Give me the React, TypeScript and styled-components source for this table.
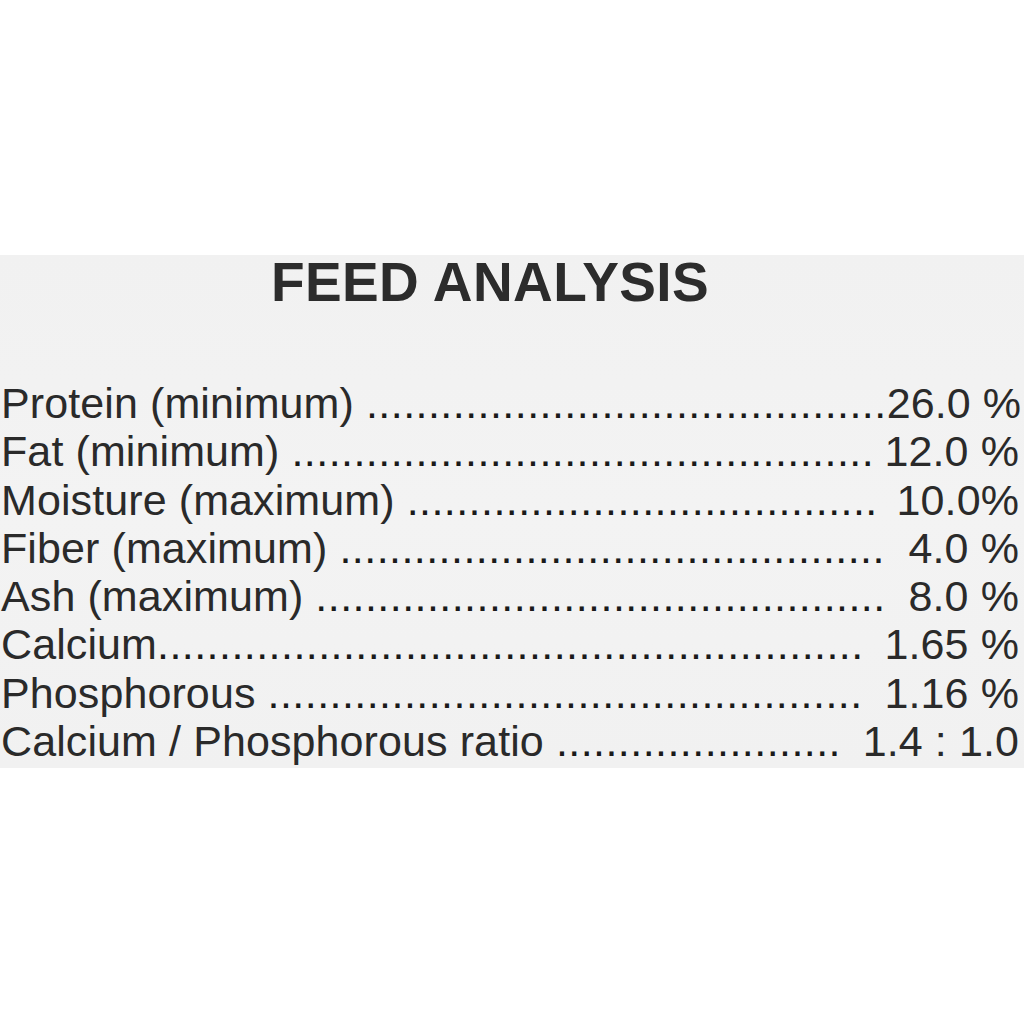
import React from "react";
import styled, { createGlobalStyle } from "styled-components";

const Global = createGlobalStyle`
  html, body {
    margin: 0;
    padding: 0;
    background: #ffffff;
  }
  body {
    font-family: "Liberation Sans", Arial, sans-serif;
  }
`;

const Page = styled.div`
  width: 1024px;
  height: 1024px;
  padding-top: 255px;
  box-sizing: border-box;
  background: #ffffff;
  overflow: hidden;
`;

const Label = styled.section`
  background: linear-gradient(180deg, #f1f1f1 0%, #f3f3f3 50%, #f1f1f1 100%);
  height: 513px;
  box-sizing: border-box;
  padding: 0 5px 0 1px;
  color: #2a2a2a;
  display: flex;
  flex-direction: column;
`;

const Title = styled.h1`
  margin: 0 40px 0 0;
  padding: 0;
  text-align: center;
  font-size: 55px;
  line-height: 55px;
  letter-spacing: 0.4px;
  font-weight: 700;
  color: #2c2c2c;
`;

const Rows = styled.div`
  margin-top: 69px;
  display: flex;
  flex-direction: column;
`;

const Row = styled.div`
  display: flex;
  align-items: baseline;
  font-size: 43px;
  line-height: 48.3px;
  letter-spacing: 0.1px;
  white-space: nowrap;
`;

const Name = styled.span`
  flex: none;
`;

const Leader = styled.span<{ $tight?: boolean }>`
  flex: none;
  letter-spacing: 0.45px;
  color: #1a1a1a;
  margin-left: ${(p) => (p.$tight ? "0" : "0.28em")};
`;

const Value = styled.span`
  flex: none;
  margin-left: auto;
`;

const data: { name: string; value: string; tight?: boolean; dots: number }[] = [
  { name: "Protein (minimum)", value: "26.0 %", dots: 42 },
  { name: "Fat (minimum)", value: "12.0 %", dots: 47 },
  { name: "Moisture (maximum)", value: "10.0%", dots: 38 },
  { name: "Fiber (maximum)", value: "4.0 %", dots: 44 },
  { name: "Ash (maximum)", value: "8.0 %", dots: 46 },
  { name: "Calcium", value: "1.65 %", tight: true, dots: 57 },
  { name: "Phosphorous", value: "1.16 %", dots: 48 },
  { name: "Calcium / Phosphorous ratio", value: "1.4 : 1.0", dots: 23 },
];

export default function App() {
  return (
    <>
      <Global />
      <Page>
        <Label>
          <Title>FEED ANALYSIS</Title>
          <Rows>
            {data.map((d) => (
              <Row key={d.name}>
                <Name>{d.name}</Name>
                <Leader $tight={d.tight}>{".".repeat(d.dots)}</Leader>
                <Value>{d.value}</Value>
              </Row>
            ))}
          </Rows>
        </Label>
      </Page>
    </>
  );
}
